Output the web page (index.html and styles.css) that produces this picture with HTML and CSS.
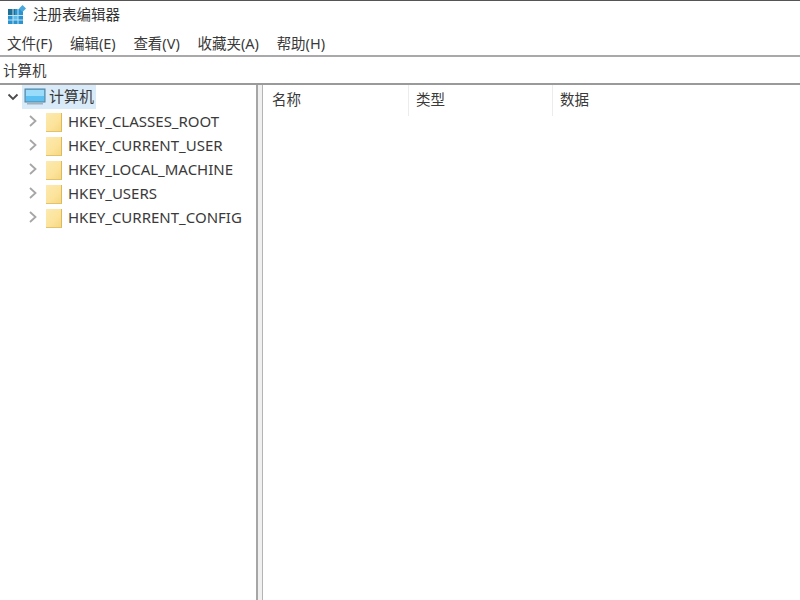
FILE: index.html
```html
<!DOCTYPE html>
<html lang="zh-CN">
<head>
<meta charset="utf-8">
<title>注册表编辑器</title>
<link rel="stylesheet" href="styles.css">
</head>
<body>
<div class="window">
  <header class="titlebar">
    <svg class="appicon" width="18" height="19" viewBox="0 0 18 19">
      <rect x="0" y="4" width="15" height="15" fill="#2b93cf"/>
      <rect x="0" y="4" width="7" height="7" fill="#1f6f94"/>
      <rect x="5" y="10" width="5" height="5" fill="#5cbcea"/>
      <path d="M0 10.500H15M0 15H15M5 4V19M10 4V19" stroke="#bfe2f4" stroke-width="1"/>
      <path d="M14.500 0L18 3.500L14.500 7L11 3.500Z" fill="#4aa9dd"/>
    </svg>
    <span class="title">注册表编辑器</span>
  </header>
  <nav class="menubar">
    <span>文件(F)</span><span>编辑(E)</span><span>查看(V)</span><span>收藏夹(A)</span><span>帮助(H)</span>
  </nav>
  <div class="address">计算机</div>
  <main class="panes">
    <section class="tree">
      <div class="root">
        <svg class="chev" width="12" height="12" viewBox="0 0 12 12"><path d="M1.500 3.500L6 8L10.500 3.500" fill="none" stroke="#4a4a4a" stroke-width="1.800"/></svg>
        <div class="root-sel">
          <svg width="24" height="20" viewBox="0 0 24 20">
            <rect x="2" y="2" width="20" height="13" fill="#5cc0f2" stroke="#5d7f96"/>
            <rect x="3" y="3" width="18" height="6" fill="#9adcf9"/>
            <rect x="4" y="16" width="16" height="1.500" fill="#9fb2c0"/>
          </svg>
          <span class="root-label">计算机</span>
        </div>
      </div>
      <div class="key"><svg class="chev" width="10" height="14" viewBox="0 0 10 14"><path d="M2 2L7.500 7L2 12" fill="none" stroke="#a6a6a6" stroke-width="1.800"/></svg><i class="folder"></i><span>HKEY_CLASSES_ROOT</span></div>
      <div class="key"><svg class="chev" width="10" height="14" viewBox="0 0 10 14"><path d="M2 2L7.500 7L2 12" fill="none" stroke="#a6a6a6" stroke-width="1.800"/></svg><i class="folder"></i><span>HKEY_CURRENT_USER</span></div>
      <div class="key"><svg class="chev" width="10" height="14" viewBox="0 0 10 14"><path d="M2 2L7.500 7L2 12" fill="none" stroke="#a6a6a6" stroke-width="1.800"/></svg><i class="folder"></i><span>HKEY_LOCAL_MACHINE</span></div>
      <div class="key"><svg class="chev" width="10" height="14" viewBox="0 0 10 14"><path d="M2 2L7.500 7L2 12" fill="none" stroke="#a6a6a6" stroke-width="1.800"/></svg><i class="folder"></i><span>HKEY_USERS</span></div>
      <div class="key"><svg class="chev" width="10" height="14" viewBox="0 0 10 14"><path d="M2 2L7.500 7L2 12" fill="none" stroke="#a6a6a6" stroke-width="1.800"/></svg><i class="folder"></i><span>HKEY_CURRENT_CONFIG</span></div>
    </section>
    <div class="splitter"></div>
    <section class="list">
      <div class="col col-name">名称</div>
      <div class="col col-type">类型</div>
      <div class="col col-data">数据</div>
    </section>
  </main>
</div>
</body>
</html>
```
FILE: styles.css
```css
* { box-sizing: border-box; }
html, body { margin: 0; height: 100%; overflow: hidden; background: #fff; }
body {
  font-family: "Noto Sans", "Noto Sans CJK SC", sans-serif;
  font-size: 14.5px;
  color: #3a3a3a;
}
.window { display: flex; flex-direction: column; height: 600px; border-top: 1px solid #555; }
.titlebar { display: flex; align-items: center; height: 26px; padding-left: 8px; gap: 7px; }
.appicon { flex: none; }
.title { color: #333; line-height: 26px; }
.menubar { display: flex; height: 30px; align-items: center; padding: 3px 0 0 7px; gap: 17.7px; border-bottom: 2px solid #a9a9a9; }
.address { height: 28px; padding-left: 3px; line-height: 26px; border-bottom: 2px solid #9a9a9a; }
.panes { flex: 1; display: flex; min-height: 0; }
.tree { width: 256px; font-size: 15px; }
.root { display: flex; align-items: center; height: 24px; padding-left: 7px; gap: 3px; }
.root-sel { display: flex; align-items: center; height: 24px; width: 74px; padding-left: 1px; gap: 2px; background: #d9ebf9; }
.root-label { line-height: 22px; margin-bottom: 2px; }
.key { display: flex; align-items: center; height: 24px; padding-left: 28px; }
.key .chev { flex: none; }
.folder { flex: none; width: 16px; height: 19px; margin: 2px 6px 0 8px; background: linear-gradient(135deg, #fdeab0, #fbe39a 60%, #f6d883); border-right: 1px solid #dcb95a; border-bottom: 1px solid #e2c36c; }
.splitter { width: 7px; border-left: 2px solid #a6a6a6; border-right: 1px solid #b4b4b4; background: #f0f0f0; }
.list { flex: 1; display: flex; align-items: flex-start; }
.col { height: 31px; line-height: 28px; padding-left: 9px; border-right: 1px solid #ececec; }
.col-name { width: 146px; }
.col-type { width: 144px; padding-left: 7px; }
.col-data { width: 144px; padding-left: 7px; border-right: 0; }
```
